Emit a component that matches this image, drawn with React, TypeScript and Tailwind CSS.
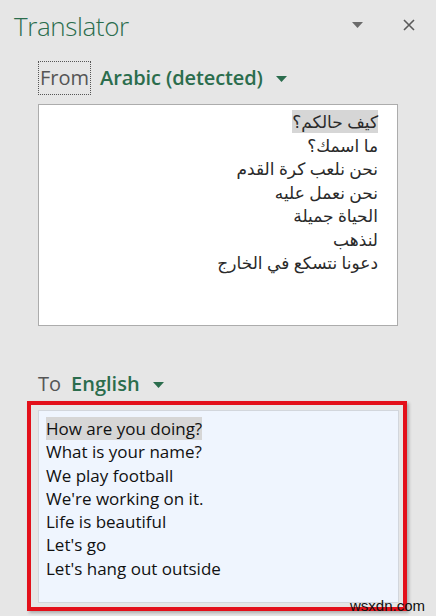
import React from 'react';

const ARABIC = [
  'كيف حالكم؟',
  'ما اسمك؟',
  'نحن نلعب كرة القدم',
  'نحن نعمل عليه',
  'الحياة جميلة',
  'لنذهب',
  'دعونا نتسكع في الخارج',
];

const ENGLISH = [
  'How are you doing?',
  'What is your name?',
  'We play football',
  "We're working on it.",
  'Life is beautiful',
  "Let's go",
  "Let's hang out outside",
];

const FONT = { fontFamily: '"Open Sans", "DejaVu Sans", sans-serif' };

function Caret({ color }: { color: string }) {
  return (
    <svg width="11" height="6" viewBox="0 0 11 6" className="shrink-0">
      <path d="M0 0 H11 L5.5 6 Z" fill={color} />
    </svg>
  );
}

export default function App() {
  return (
    <div className="relative w-[436px] h-[616px] overflow-hidden bg-[#e6e6e6] text-[#222]" style={FONT}>
      {/* Header */}
      <div className="flex items-center h-[52px] pl-[14px] pr-[21px]">
        <h1 className="flex-1 text-[26px] font-light text-[#2b6d4d] leading-none tracking-[-0.4px]">
          Translator
        </h1>
        <div className="mr-[40px] mt-[-2px]">
          <Caret color="#6b6b6b" />
        </div>
        <svg width="12" height="12" viewBox="0 0 12 12" className="mt-[-2px]">
          <path d="M1 1 L11 11 M11 1 L1 11" stroke="#5a5a5a" strokeWidth="1.6" />
        </svg>
      </div>

      <div className="ml-[38px] w-[360px]">
        {/* From */}
        <div className="flex items-center h-[34px] mt-[9px]">
          <span className="h-[34px] flex items-center px-[1px] border border-dotted border-[#555] text-[20px] text-[#555] leading-none">
            From
          </span>
          <span className="ml-[9px] text-[20px] font-semibold text-[#2b6d4d] leading-none tracking-[-0.1px]">
            Arabic (detected)
          </span>
          <span className="ml-[13px] mt-[2px]">
            <Caret color="#2b6d4d" />
          </span>
        </div>

        {/* Source */}
        <div
          dir="rtl"
          className="mt-[9px] h-[222px] bg-white border border-[#acacac] pt-[5px] pr-[19px] text-[17px] leading-[23.5px] text-[#2a2a2a]"
        >
          {ARABIC.map((line, i) => (
            <div key={i}>
              <span className={i === 0 ? 'bg-[#d6d6d6]' : ''}>{line}</span>
            </div>
          ))}
        </div>

        {/* To */}
        <div className="flex items-center h-[28px] mt-[44px]">
          <span className="text-[20px] text-[#555] leading-none">To</span>
          <span className="ml-[10px] text-[20px] font-semibold text-[#2b6d4d] leading-none">English</span>
          <span className="ml-[13px] mt-[2px]">
            <Caret color="#2b6d4d" />
          </span>
        </div>
      </div>

      {/* Target, framed in red */}
      <div className="ml-[27px] mt-[3px] w-[380px] h-[210px] border-4 border-[#e3101a] pl-[7px] pt-[5px] pr-[4px] pb-[4px] shadow-[2px_2px_3px_rgba(0,0,0,0.25)]">
        <div className="h-full bg-[#eff5fe] border border-[#d2d6dc] pt-[6px] pl-[7px] text-[17px] leading-[23.3px] text-[#111]">
          {ENGLISH.map((line, i) => (
            <div key={i}>
              <span className={i === 0 ? 'bg-[#d6d6d6]' : ''}>{line}</span>
            </div>
          ))}
        </div>
      </div>

      <span className="absolute right-[11px] bottom-[3px] text-[15px] leading-none text-[#111]" style={{ fontFamily: '"Liberation Sans", sans-serif' }}>
        wsxdn.com
      </span>
    </div>
  );
}
